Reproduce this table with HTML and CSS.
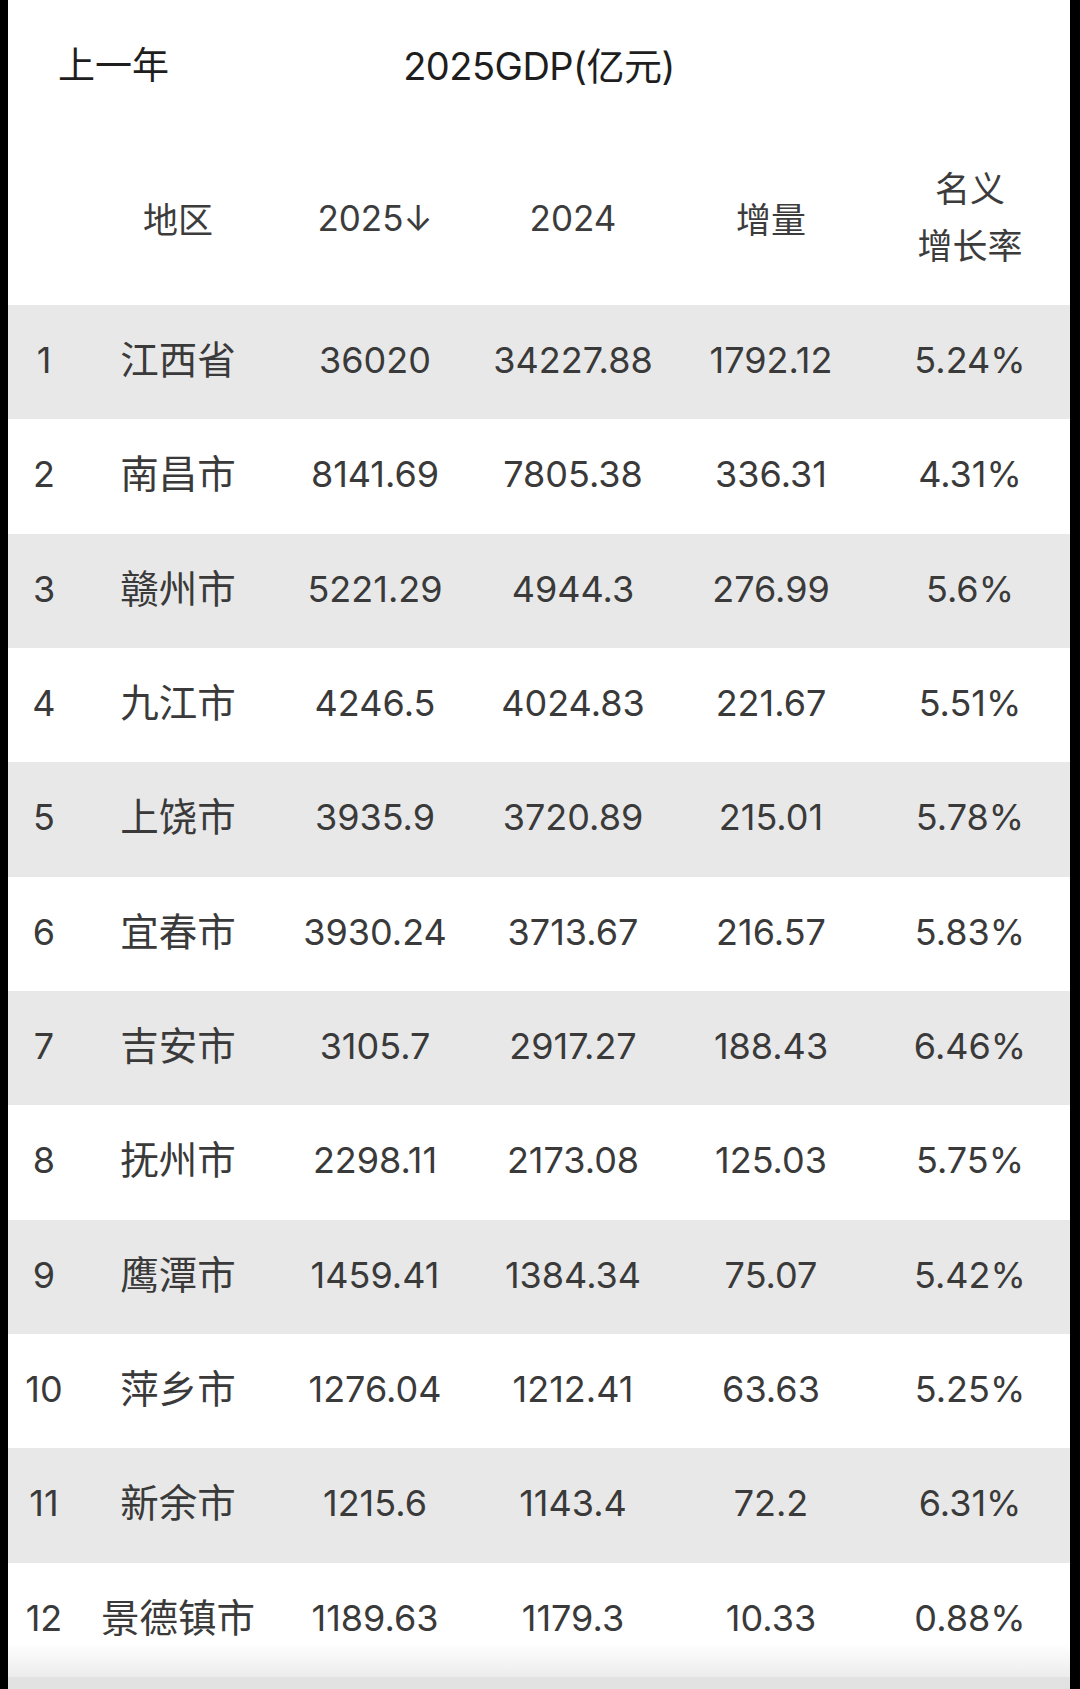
FILE: index.html
```html
<!DOCTYPE html>
<html lang="zh-CN">
<head>
<meta charset="utf-8">
<title>2025GDP</title>
<link rel="stylesheet" href="styles.css">
</head>
<body>
<div class="sheet">
  <div class="title-bar">
    <div class="title-left">上一年</div>
    <div class="title-center">2025GDP(亿元)</div>
  </div>
  <div class="row head">
    <div class="cell"></div>
    <div class="cell">地区</div>
    <div class="cell">2025↓</div>
    <div class="cell">2024</div>
    <div class="cell">增量</div>
    <div class="cell stack"><span>名义</span><span>增长率</span></div>
  </div>
  <div class="row odd"><div class="cell">1</div><div class="cell name">江西省</div><div class="cell">36020</div><div class="cell">34227.88</div><div class="cell">1792.12</div><div class="cell">5.24%</div></div>
  <div class="row"><div class="cell">2</div><div class="cell name">南昌市</div><div class="cell">8141.69</div><div class="cell">7805.38</div><div class="cell">336.31</div><div class="cell">4.31%</div></div>
  <div class="row odd"><div class="cell">3</div><div class="cell name">赣州市</div><div class="cell">5221.29</div><div class="cell">4944.3</div><div class="cell">276.99</div><div class="cell">5.6%</div></div>
  <div class="row"><div class="cell">4</div><div class="cell name">九江市</div><div class="cell">4246.5</div><div class="cell">4024.83</div><div class="cell">221.67</div><div class="cell">5.51%</div></div>
  <div class="row odd"><div class="cell">5</div><div class="cell name">上饶市</div><div class="cell">3935.9</div><div class="cell">3720.89</div><div class="cell">215.01</div><div class="cell">5.78%</div></div>
  <div class="row"><div class="cell">6</div><div class="cell name">宜春市</div><div class="cell">3930.24</div><div class="cell">3713.67</div><div class="cell">216.57</div><div class="cell">5.83%</div></div>
  <div class="row odd"><div class="cell">7</div><div class="cell name">吉安市</div><div class="cell">3105.7</div><div class="cell">2917.27</div><div class="cell">188.43</div><div class="cell">6.46%</div></div>
  <div class="row"><div class="cell">8</div><div class="cell name">抚州市</div><div class="cell">2298.11</div><div class="cell">2173.08</div><div class="cell">125.03</div><div class="cell">5.75%</div></div>
  <div class="row odd"><div class="cell">9</div><div class="cell name">鹰潭市</div><div class="cell">1459.41</div><div class="cell">1384.34</div><div class="cell">75.07</div><div class="cell">5.42%</div></div>
  <div class="row"><div class="cell">10</div><div class="cell name">萍乡市</div><div class="cell">1276.04</div><div class="cell">1212.41</div><div class="cell">63.63</div><div class="cell">5.25%</div></div>
  <div class="row odd"><div class="cell">11</div><div class="cell name">新余市</div><div class="cell">1215.6</div><div class="cell">1143.4</div><div class="cell">72.2</div><div class="cell">6.31%</div></div>
  <div class="row last"><div class="cell">12</div><div class="cell name">景德镇市</div><div class="cell">1189.63</div><div class="cell">1179.3</div><div class="cell">10.33</div><div class="cell">0.88%</div></div>
  <div class="foot"></div>
</div>
</body>
</html>
```

FILE: styles.css
```css
html, body {
  margin: 0;
  padding: 0;
  background: #000;
}
body {
  width: 1080px;
  height: 1689px;
  overflow: hidden;
  font-family: Inter, "Noto Sans CJK SC", sans-serif;
  color: #3a3a3a;
}
.sheet {
  margin-left: 8px;
  width: 1062px;
  height: 1689px;
  background: #fff;
  display: flex;
  flex-direction: column;
}
.title-bar {
  height: 132px;
  position: relative;
  display: flex;
  align-items: center;
  font-size: 37px;
  color: #1e1e1e;
  padding-bottom: 6px;
  box-sizing: border-box;
}
.title-left {
  padding-left: 50px;
}
.title-center {
  position: absolute;
  left: 0;
  right: 0;
  top: 0;
  bottom: 6px;
  display: flex;
  align-items: center;
  justify-content: center;
  font-size: 38px;
  letter-spacing: -0.5px;
}
.row {
  display: grid;
  grid-template-columns: 72px 196px 198px 198px 198px 200px;
  height: 114.33px;
  align-items: center;
  font-size: 36px;
  padding-bottom: 4px;
  box-sizing: border-box;
}
.row.head {
  height: 173px;
  font-size: 35px;
  color: #3c3c3c;
  padding-bottom: 2px;
}
.row.odd {
  background: #e8e8e8;
}
.row.last {
  background: linear-gradient(#fff 0%, #fff 70%, #ececec 100%);
}
.cell {
  text-align: center;
  white-space: nowrap;
}
.name {
  font-size: 38.5px;
  padding-bottom: 6px;
}
.stack {
  display: flex;
  flex-direction: column;
  align-items: center;
  line-height: 57px;
}
.foot {
  flex: 1;
  background: #e2e2e2;
}
```
